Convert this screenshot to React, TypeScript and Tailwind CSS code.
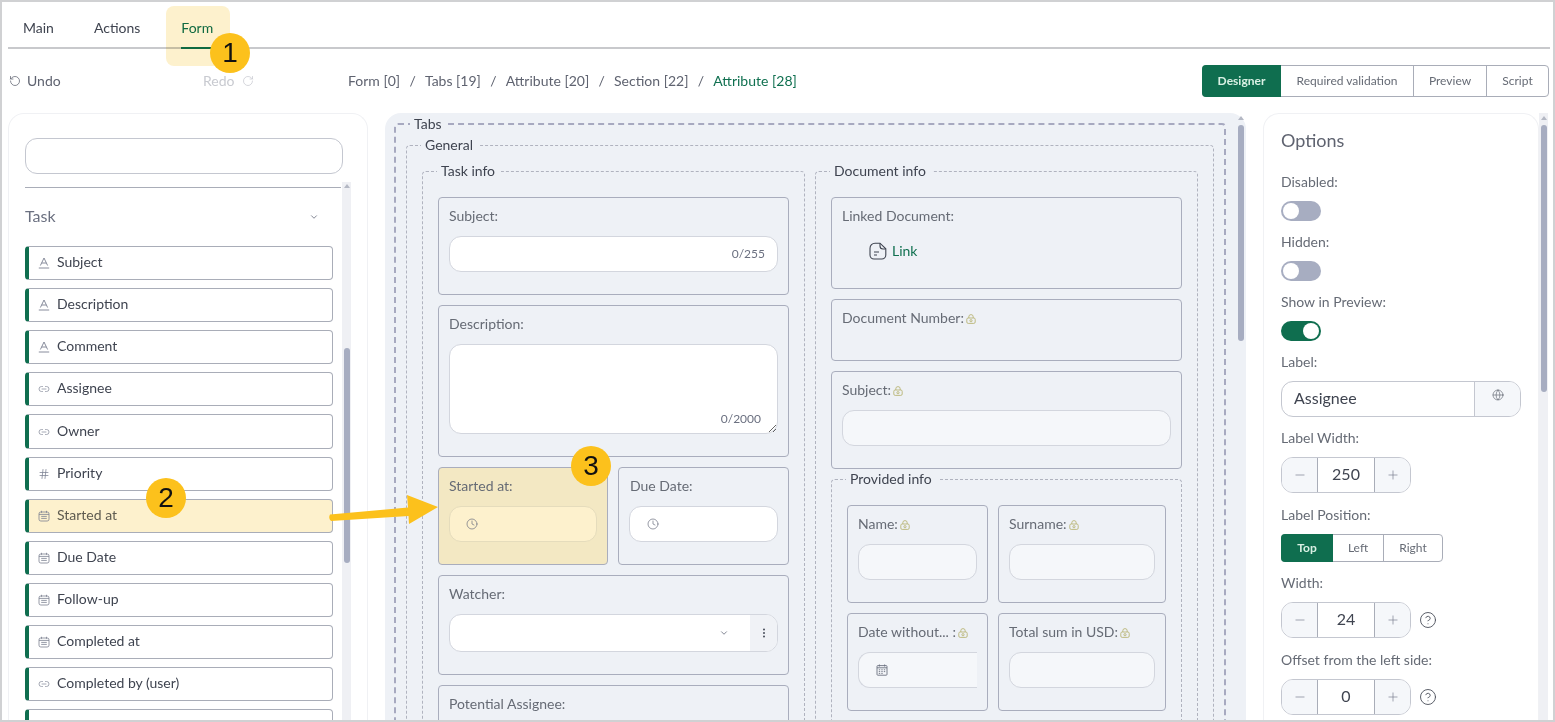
import React from 'react';
import {
  ChevronDown,
  CircleHelp,
  Clock,
  EllipsisVertical,
  Globe,
  Hash,
  Link2,
  Minus,
  Plus,
  RotateCcw,
  RotateCw,
} from 'lucide-react';

function TextMark({ className }: { className?: string }) {
  return (
    <svg viewBox="0 0 12 12" fill="none" stroke="currentColor" strokeWidth="0.9" className={className}>
      <path d="M2.400 8.500L6 1L9.600 8.500M3.700 6H8.300M0.800 11H11.200" />
    </svg>
  );
}

function CalendarLines({ className }: { className?: string }) {
  return (
    <svg viewBox="0 0 12 12" fill="none" stroke="currentColor" strokeWidth="0.8" className={className}>
      <rect x="1" y="2" width="10" height="9" rx="1.8" />
      <path d="M3.500 0.800v2M8.500 0.800v2M1 4.400h10M3.200 6.400h5.600M3.200 8.400h5.600" />
    </svg>
  );
}

function CalendarGrid({ className }: { className?: string }) {
  return (
    <svg viewBox="0 0 12 12" fill="none" stroke="currentColor" strokeWidth="0.9" className={className}>
      <rect x="1" y="1.600" width="10" height="9.600" rx="0.800" />
      <path d="M3.400 0.500v2M8.600 0.500v2M1 3.800h10M2.800 5.800h1.400M5.300 5.800h1.400M7.800 5.800h1.400M2.800 7.600h1.400M5.300 7.600h1.400M7.800 7.600h1.400M2.800 9.400h1.400M5.300 9.400h1.400" />
    </svg>
  );
}

function LockMark() {
  return (
    <svg viewBox="0 0 10 10" fill="none" stroke="#b9b676" strokeWidth="0.9" className="w-[10px] h-[10px] ml-[2px] mt-[2px] shrink-0">
      <rect x="0.800" y="4" width="8.400" height="5.400" rx="1.400" />
      <path d="M2.800 4V2.800a2.200 2.200 0 0 1 4.400 0V4" />
      <circle cx="5" cy="6.700" r="1.100" />
    </svg>
  );
}

function DocNote() {
  return (
    <svg viewBox="0 0 18 18" fill="none" stroke="#3f4450" strokeWidth="1.100" className="w-[18px] h-[18px] shrink-0">
      <path d="M6 1.200h5l5.800 5.600V13a4 4 0 0 1-4 4H5a4 4 0 0 1-4-4V6.200a5 5 0 0 1 5-5z" />
      <path d="M11 1.200V4a3 3 0 0 0 3 3h2.800M5 10h5M5 13h3" />
    </svg>
  );
}

function Legend({ children }: { children: React.ReactNode }) {
  return <legend className="ml-[14px] pl-1 pr-[6px] text-sm leading-5 text-[#3f4450]">{children}</legend>;
}

function Card({ label, locked, className, children }: { label: string; locked?: boolean; className: string; children?: React.ReactNode }) {
  return (
    <div className={`border border-[#a9adbd] rounded-[4px] px-[10px] pt-[8px] shrink-0 ${className}`}>
      <div className="flex items-center h-5 text-sm leading-5 text-[#666b75]">
        <span>{label}</span>
        {locked && <LockMark />}
      </div>
      {children}
    </div>
  );
}

function Field({ readOnly, children }: { readOnly?: boolean; children?: React.ReactNode }) {
  return (
    <div className={`mt-[10px] h-9 rounded-xl border border-[#d3d6de] flex items-center ${readOnly ? 'bg-[#f5f7fa]' : 'bg-white'}`}>
      {children}
    </div>
  );
}

const fields = [
  { name: 'Subject', icon: 'text' },
  { name: 'Description', icon: 'text' },
  { name: 'Comment', icon: 'text' },
  { name: 'Assignee', icon: 'link' },
  { name: 'Owner', icon: 'link', tall: true },
  { name: 'Priority', icon: 'hash' },
  { name: 'Started at', icon: 'date', active: true },
  { name: 'Due Date', icon: 'date' },
  { name: 'Follow-up', icon: 'date' },
  { name: 'Completed at', icon: 'date' },
  { name: 'Completed by (user)', icon: 'link' },
  { name: '', icon: '' },
];

function FieldIcon({ icon }: { icon: string }) {
  if (icon === 'text') return <TextMark className="w-3 h-3 text-[#7b8091]" />;
  if (icon === 'link') return <Link2 className="w-3 h-3 text-[#8a8f9d]" strokeWidth={1.5} />;
  if (icon === 'hash') return <Hash className="w-3 h-3 text-[#7b8091]" strokeWidth={1.5} />;
  if (icon === 'date') return <CalendarLines className="w-3 h-3 text-[#7b8091]" />;
  return null;
}

function Sidebar() {
  return (
    <div className="w-[360px] shrink-0 rounded-t-2xl border border-b-0 border-[#f0f1f4] pl-4 pt-6">
      <input readOnly className="block w-[318px] h-9 rounded-xl border border-[#c4c7d0] bg-white" />
      <div className="flex mt-2">
        <div className="w-[317px] shrink-0">
          <div className="mt-[5px] w-[316px] border-t border-[#a9adb8]" />
          <div className="flex items-center justify-between h-[58px] pb-[2px] pr-[23px] text-base text-[#6b7080]">
            <span>Task</span>
            <ChevronDown className="w-[10px] h-[10px] mt-[2px] text-[#6b7080]" />
          </div>
          <div className="flex flex-col gap-2 w-[308px]">
            {fields.map((f, i) => (
              <div
                key={i}
                className={`flex items-center shrink-0 rounded-[4px] border border-l-4 border-[#a9adb8] border-l-[#0f6e4f] pl-[9px] ${f.tall ? 'h-[35px]' : 'h-[34px]'} ${f.active ? 'bg-[#fdf1cd]' : 'bg-white'}`}
              >
                <span className="w-[19px] flex shrink-0">
                  <FieldIcon icon={f.icon} />
                </span>
                <span className={`text-sm leading-5 pb-[2px] ${f.active ? 'text-[#5e5b50]' : 'text-[#3f4450]'}`}>{f.name}</span>
              </div>
            ))}
          </div>
        </div>
        <div className="w-[9px] shrink-0 bg-[#eff0f4] h-[600px] flex flex-col items-center">
          <div className="w-0 h-0 mt-[2px] border-x-[3px] border-x-transparent border-b-[4px] border-b-[#b4b8c4]" />
          <div className="w-[6px] h-[215px] mt-[160px] rounded-full bg-[#a7adc1]" />
        </div>
      </div>
    </div>
  );
}

function Canvas() {
  return (
    <div className="w-[861px] shrink-0 rounded-t-2xl bg-[#eef1f6] pl-[9px] pt-px flex">
      <fieldset className="w-[832px] shrink-0 border-2 border-dashed border-[#a7a9c0] rounded-[4px] h-[700px]">
        <Legend>Tabs</Legend>
        <div className="pl-[10px] pt-px">
          <fieldset className="w-[808px] border border-dashed border-[#b0b3bf] rounded-[4px]">
            <Legend>General</Legend>
            <div className="flex gap-[10px] px-[15px] pt-[6px]">
              <fieldset className="w-[383px] shrink-0 border border-dashed border-[#b0b3bf] rounded-[4px]">
                <Legend>Task info</Legend>
                <div className="flex flex-col gap-[10px] px-[15px] pt-4">
                  <Card label="Subject:" className="h-[98px]">
                    <Field>
                      <span className="ml-auto mr-3 text-xs text-[#6b7080]">0/255</span>
                    </Field>
                  </Card>
                  <Card label="Description:" className="h-[152px]">
                    <div className="relative mt-[10px] h-[90px]">
                      <textarea readOnly className="block w-full h-[90px] rounded-xl border border-[#d3d6de] bg-white" />
                      <span className="absolute right-[17px] bottom-[7px] text-xs text-[#6b7080]">0/2000</span>
                    </div>
                  </Card>
                  <div className="flex gap-[10px]">
                    <Card label="Started at:" className="w-[170px] h-[98px] bg-[#f3e8c3]">
                      <div className="mt-[10px] h-9 rounded-xl border border-[#e5dcbc] bg-[#fdf1cd] flex items-center pl-[16px]">
                        <Clock className="w-3 h-3 text-[#6b7080]" strokeWidth={1.4} />
                      </div>
                    </Card>
                    <Card label="Due Date:" className="w-[171px] h-[98px] !pl-[11px]">
                      <div className="-ml-px">
                        <Field>
                          <Clock className="w-3 h-3 ml-[17px] text-[#6b7080]" strokeWidth={1.4} />
                        </Field>
                      </div>
                    </Card>
                  </div>
                  <Card label="Watcher:" className="h-[100px]">
                    <div className="mt-[10px] h-[38px] rounded-xl border border-[#d3d6de] bg-white flex items-center overflow-hidden">
                      <div className="flex-1 flex justify-end pr-[21px]">
                        <ChevronDown className="w-[10px] h-[10px] text-[#6b7080]" />
                      </div>
                      <div className="w-[27px] h-full bg-[#f0f2f6] flex items-center justify-center">
                        <EllipsisVertical className="w-3 h-3 text-[#555a66]" strokeWidth={2.4} />
                      </div>
                    </div>
                  </Card>
                  <Card label="Potential Assignee:" className="h-[100px]" />
                </div>
              </fieldset>
              <fieldset className="w-[383px] shrink-0 border border-dashed border-[#b0b3bf] rounded-[4px]">
                <Legend>Document info</Legend>
                <div className="flex flex-col gap-[10px] px-[15px] pt-4">
                  <Card label="Linked Document:" className="h-[92px]">
                    <div className="flex items-center gap-[5px] mt-[15px] ml-[27px] text-sm text-[#107050]">
                      <DocNote />
                      <span>Link</span>
                    </div>
                  </Card>
                  <Card label="Document Number:" locked className="h-[62px]" />
                  <Card label="Subject:" locked className="h-[98px]">
                    <Field readOnly />
                  </Card>
                  <fieldset className="w-[351px] -mt-[10px] border border-dashed border-[#b0b3bf] rounded-[4px]">
                    <Legend>Provided info</Legend>
                    <div className="flex flex-col gap-[10px] px-[15px] pt-4 pb-10">
                      <div className="flex gap-[10px]">
                        <Card label="Name:" locked className="w-[141px] h-[98px]">
                          <Field readOnly />
                        </Card>
                        <Card label="Surname:" locked className="w-[168px] h-[98px]">
                          <Field readOnly />
                        </Card>
                      </div>
                      <div className="flex gap-[10px]">
                        <Card label="Date without... :" locked className="w-[141px] h-[98px]">
                          <div className="mt-[10px] h-9 rounded-l-xl border border-r-0 border-[#d3d6de] bg-[#f5f7fa] flex items-center pl-[17px]">
                            <CalendarGrid className="w-3 h-3 text-[#6b7080]" />
                          </div>
                        </Card>
                        <Card label="Total sum in USD:" locked className="w-[168px] h-[98px]">
                          <Field readOnly />
                        </Card>
                      </div>
                    </div>
                  </fieldset>
                </div>
              </fieldset>
            </div>
          </fieldset>
        </div>
      </fieldset>
      <div className="ml-3 w-[6px] shrink-0 flex flex-col items-center">
        <div className="w-0 h-0 mt-[2px] border-x-[3px] border-x-transparent border-b-[4px] border-b-[#b4b8c4]" />
        <div className="w-[6px] h-[216px] mt-[5px] rounded-full bg-[#a7adc1]" />
      </div>
    </div>
  );
}

function OptLabel({ className, children }: { className: string; children: React.ReactNode }) {
  return <div className={`h-5 text-sm leading-5 text-[#666b75] ${className}`}>{children}</div>;
}

function Toggle({ on }: { on?: boolean }) {
  return (
    <div className={`mt-[9px] w-10 h-5 rounded-full p-[2px] flex ${on ? 'bg-[#0f6e4f] justify-end' : 'bg-[#a7adc1]'}`}>
      <div className="w-4 h-4 rounded-full bg-white" />
    </div>
  );
}

function Stepper({ value, help }: { value: string; help?: boolean }) {
  return (
    <div className="mt-[9px] flex items-center">
      <div className="w-[130px] h-9 rounded-xl border border-[#c4c7d0] flex overflow-hidden text-[#3f4450]">
        <div className="w-9 bg-[#f5f7fa] border-r border-[#a9adb8] flex items-center justify-center shrink-0">
          <Minus className="w-[14px] h-[14px] text-[#7b8091]" strokeWidth={1.2} />
        </div>
        <div className="flex-1 flex items-center justify-center text-base pb-[2px] bg-white">{value}</div>
        <div className="w-9 bg-[#f5f7fa] border-l border-[#a9adb8] flex items-center justify-center shrink-0">
          <Plus className="w-[14px] h-[14px] text-[#7b8091]" strokeWidth={1.2} />
        </div>
      </div>
      {help && <CircleHelp className="w-[18px] h-[18px] ml-2 text-[#4b4f5a]" strokeWidth={1.2} />}
    </div>
  );
}

function Options() {
  return (
    <div className="flex shrink-0">
      <div className="w-[276px] rounded-t-2xl border border-b-0 border-[#f0f1f4] pl-[17px] pt-[12px]">
        <div className="text-lg leading-7 text-[#5f6370]">Options</div>
        <OptLabel className="mt-[18px]">Disabled:</OptLabel>
        <Toggle />
        <OptLabel className="mt-[11px]">Hidden:</OptLabel>
        <Toggle />
        <OptLabel className="mt-[11px]">Show in Preview:</OptLabel>
        <Toggle on />
        <OptLabel className="mt-[11px]">Label:</OptLabel>
        <div className="mt-[9px] w-[240px] h-9 rounded-xl border border-[#c4c7d0] flex overflow-hidden">
          <div className="flex-1 pl-3 pb-[2px] flex items-center text-base text-[#3f4450]">Assignee</div>
          <div className="w-[46px] bg-[#f5f7fa] border-l border-[#c4c7d0] flex justify-center pt-[7px]">
            <Globe className="w-3 h-3 text-[#555a66]" strokeWidth={1.2} />
          </div>
        </div>
        <OptLabel className="mt-[11px]">Label Width:</OptLabel>
        <Stepper value="250" />
        <OptLabel className="mt-3">Label Position:</OptLabel>
        <div className="mt-[9px] w-[162px] h-7 rounded-[4px] border border-[#a9adb8] flex text-xs text-[#666b75]">
          <div className="w-[52px] -ml-px -my-px rounded-l-[4px] bg-[#0f6e4f] text-[#d9f0e4] font-bold flex items-center justify-center">Top</div>
          <div className="w-[51px] border-r border-[#a9adb8] flex items-center justify-center">Left</div>
          <div className="flex-1 flex items-center justify-center">Right</div>
        </div>
        <OptLabel className="mt-[11px]">Width:</OptLabel>
        <Stepper value="24" help />
        <OptLabel className="mt-3">Offset from the left side:</OptLabel>
        <Stepper value="0" help />
      </div>
      <div className="w-[9px] bg-[#eff0f4] flex flex-col items-center">
        <div className="w-0 h-0 mt-[3px] border-x-[3px] border-x-transparent border-b-[4px] border-b-[#b4b8c4]" />
        <div className="w-[6px] h-[267px] mt-[5px] rounded-full bg-[#a7adc1]" />
      </div>
    </div>
  );
}

function Badge({ className, children }: { className: string; children: React.ReactNode }) {
  return (
    <div className={`absolute w-10 h-10 rounded-full bg-[#fcc11c] flex items-center justify-center text-[28px] text-[#111] font-['Liberation_Sans',sans-serif] ${className}`}>
      {children}
    </div>
  );
}

export default function App() {
  const crumbs = ['Form [0]', 'Tabs [19]', 'Attribute [20]', 'Section [22]'];
  return (
    <div className="relative w-[1555px] h-[722px] overflow-hidden border-2 border-[#d0d1d3] bg-white font-['Lato',sans-serif]">
      <div className="h-[47px] ml-[6px] mr-[3px] border-b-2 border-[#c8c9cc] flex pl-[15px] gap-10 text-sm text-[#3f4450]">
        <div className="pt-[7px] flex items-center">Main</div>
        <div className="pt-[7px] flex items-center">Actions</div>
        <div className="pt-[7px] ml-px h-[47px] flex items-center border-b-2 border-[#107050] text-[#107050]">Form</div>
      </div>
      <div className="h-16 flex items-center pl-[7px] pr-[4px] text-sm">
        <div className="w-[194px] flex items-center gap-[6px] text-[#5f6370]">
          <RotateCcw className="w-3 h-3" strokeWidth={1.5} />
          <span>Undo</span>
        </div>
        <div className="w-[145px] flex items-center gap-[7px] text-[#c8cad0]">
          <span>Redo</span>
          <RotateCw className="w-3 h-3" strokeWidth={1.5} />
        </div>
        <div className="flex items-center gap-[9.25px] text-[#5f6370]">
          {crumbs.map((c) => (
            <React.Fragment key={c}>
              <span>{c}</span>
              <span>/</span>
            </React.Fragment>
          ))}
          <span className="text-[#107050]">Attribute [28]</span>
        </div>
        <div className="ml-auto h-8 flex rounded-[4px] border border-[#a9adb8] text-xs text-[#666b75]">
          <div className="w-[79px] -ml-px -my-px rounded-l-[4px] bg-[#0f6e4f] text-[#d9f0e4] font-bold flex items-center justify-center">Designer</div>
          <div className="w-[133px] border-r border-[#a9adb8] flex items-center justify-center">Required validation</div>
          <div className="w-[73px] border-r border-[#a9adb8] flex items-center justify-center">Preview</div>
          <div className="w-[61px] flex items-center justify-center">Script</div>
        </div>
      </div>
      <div className="flex gap-[17px] pl-[6px] h-[607px] overflow-hidden">
        <Sidebar />
        <Canvas />
        <Options />
      </div>
      <div className="absolute left-[164px] top-[4px] w-16 h-[60px] rounded-lg bg-[#fdf1cd] mix-blend-multiply" />
      <Badge className="left-[208px] top-[31px]">1</Badge>
      <Badge className="left-[144px] top-[476px]">2</Badge>
      <Badge className="left-[569px] top-[444px]">3</Badge>
      <svg className="absolute left-[324px] top-[490px] w-[112px] h-[36px]" viewBox="0 0 112 36" fill="#fcc11c">
        <path d="M4 22.500 L82 15.500 L81 3 L112 15 L83 32 L82.500 24 L5 29 Q2 26 4 22.500 Z" />
      </svg>
    </div>
  );
}
